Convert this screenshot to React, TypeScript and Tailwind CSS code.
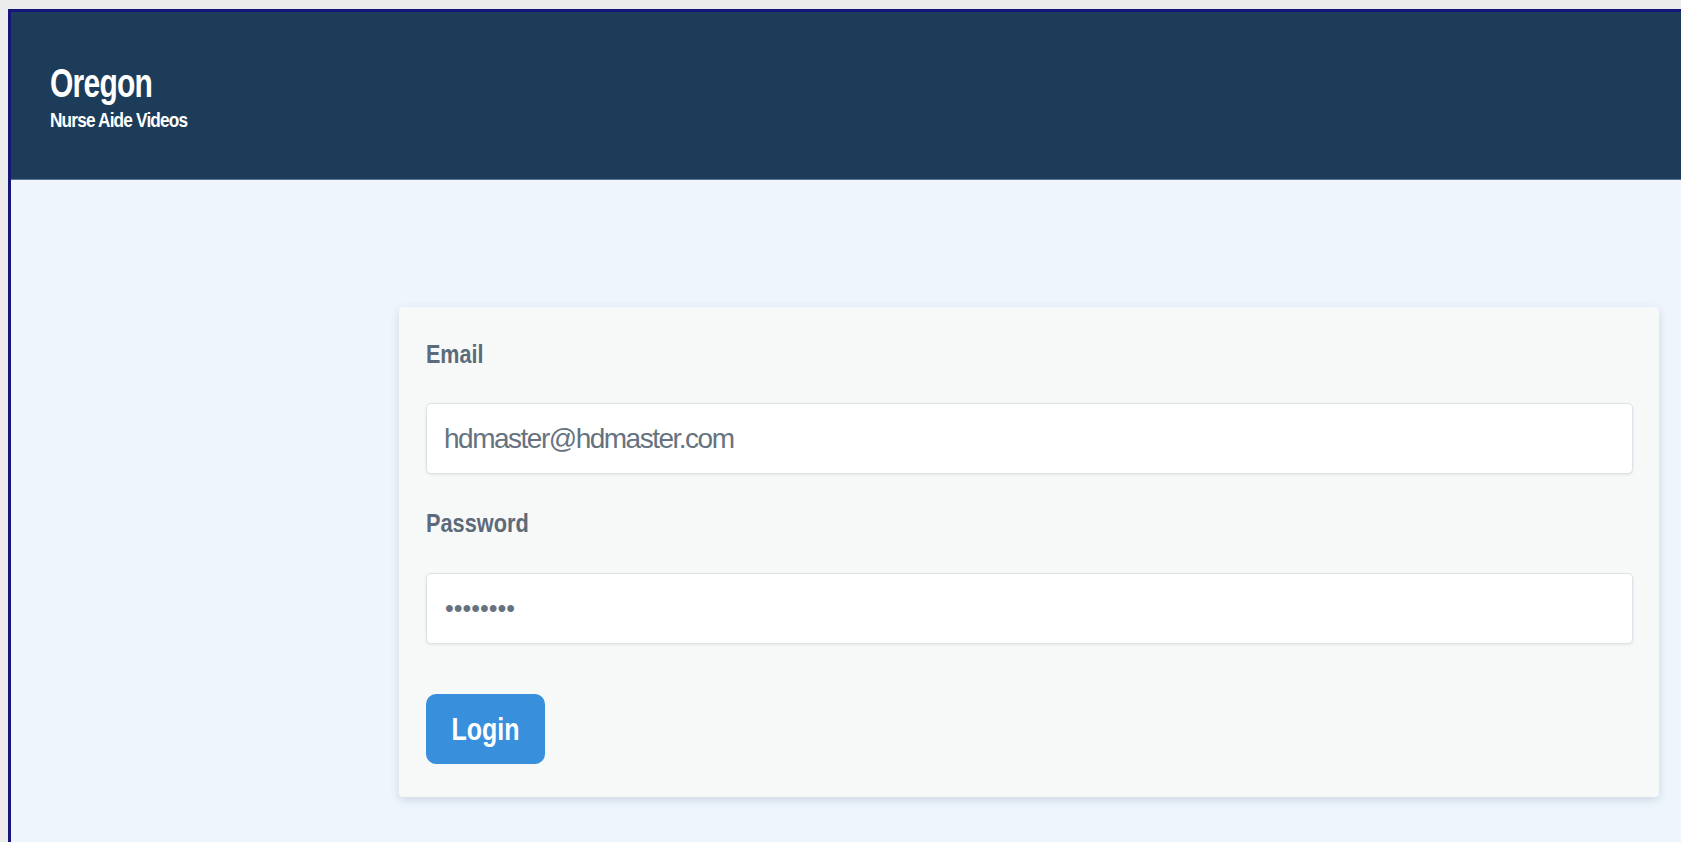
export default function App() {
  return (
    <div
      className="min-h-screen bg-[#ececec] pt-[9px] pl-[8px]"
      style={{ fontFamily: '"Liberation Sans", Arial, sans-serif' }}
    >
      <div className="flex min-h-[833px] flex-col border-t-[3px] border-l-[3px] border-[#15157a] bg-[#eef5fd]">
        {/* top banner */}
        <header className="h-[168px] border-b border-[#5f7690] bg-[#1d3c59] pt-[51px] pl-[39px] text-white">
          <h1 className="origin-left scale-x-[0.75] text-[40px] font-bold leading-none tracking-[-1px]">Oregon</h1>
          <p className="mt-[6px] origin-left scale-x-[0.82] text-[21px] font-bold leading-none tracking-[-1px]">
            Nurse Aide Videos
          </p>
        </header>

        <main className="flex-1 pt-[127px] pl-[388px]">
          <form
            onSubmit={(e) => e.preventDefault()}
            className="flex w-[1260px] flex-col rounded-[4px] bg-[#f7f9f9] px-[27px] pt-[35px] pb-[33px] shadow-[0_3px_10px_rgba(40,60,90,0.16)]"
          >
            <label className="origin-left scale-x-[0.86] text-[25px] font-bold leading-none text-[#5c6a79]">Email</label>
            <input
              type="text"
              defaultValue="hdmaster@hdmaster.com"
              className="mt-[36px] h-[71px] w-[1207px] rounded-[5px] border border-[#dde2e8] bg-white pl-[17px] text-[28px] tracking-[-1.5px] text-[#66737f] shadow-[0_1px_3px_rgba(0,0,0,0.08)] outline-none"
            />

            <label className="mt-[37px] origin-left scale-x-[0.87] text-[25px] font-bold leading-none text-[#5c6a79]">
              Password
            </label>
            <input
              type="password"
              defaultValue="password"
              className="mt-[37px] h-[71px] w-[1207px] rounded-[5px] border border-[#dde2e8] bg-white pl-[18px] text-[25px] text-[#66737f] shadow-[0_1px_3px_rgba(0,0,0,0.08)] outline-none"
            />

            <button
              type="submit"
              className="mt-[50px] flex h-[70px] w-[119px] items-center justify-center rounded-[10px] bg-[#3890dd] text-white"
            >
              <span className="inline-block scale-x-[0.78] text-[32px] font-bold leading-none">Login</span>
            </button>
          </form>
        </main>
      </div>
    </div>
  );
}
